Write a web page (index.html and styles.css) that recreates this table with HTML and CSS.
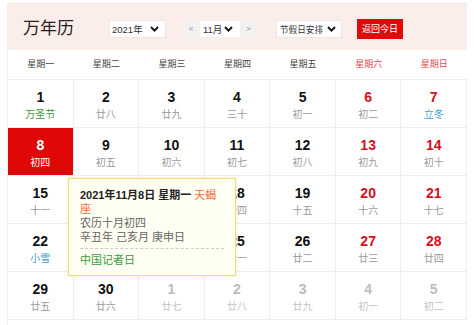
FILE: index.html
```html
<!DOCTYPE html>
<html lang="zh-CN">
<head>
<meta charset="utf-8">
<title>万年历</title>
<link rel="stylesheet" href="styles.css">
</head>
<body>
<div class="cal">
  <div class="hd">
    <div class="title">万年历</div>
    <div class="sel year"><span>2021年</span><svg class="chev" width="9" height="6" viewBox="0 0 9 6"><polyline points="1,1 4.5,4.6 8,1"/></svg></div>
    <div class="mgroup">
      <span class="arrow">&lt;</span>
      <div class="sel month"><span>11月</span><svg class="chev" width="9" height="6" viewBox="0 0 9 6"><polyline points="1,1 4.5,4.6 8,1"/></svg></div>
      <span class="arrow">&gt;</span>
    </div>
    <div class="sel hol"><span>节假日安排</span><svg class="chev" width="9" height="6" viewBox="0 0 9 6"><polyline points="1,1 4.5,4.6 8,1"/></svg></div>
    <div class="btn">返回今日</div>
  </div>
  <div class="week">
    <div>星期一</div><div>星期二</div><div>星期三</div><div>星期四</div><div>星期五</div><div class="we">星期六</div><div class="we">星期日</div>
  </div>
  <div class="grid">
    <div class="cell"><b>1</b><i class="fest">万圣节</i></div>
    <div class="cell"><b>2</b><i>廿八</i></div>
    <div class="cell"><b>3</b><i>廿九</i></div>
    <div class="cell"><b>4</b><i>三十</i></div>
    <div class="cell"><b>5</b><i>初一</i></div>
    <div class="cell red"><b>6</b><i>初二</i></div>
    <div class="cell red"><b>7</b><i class="term">立冬</i></div>

    <div class="cell today"><b>8</b><i>初四</i></div>
    <div class="cell"><b>9</b><i>初五</i></div>
    <div class="cell"><b>10</b><i>初六</i></div>
    <div class="cell"><b>11</b><i>初七</i></div>
    <div class="cell"><b>12</b><i>初八</i></div>
    <div class="cell red"><b>13</b><i>初九</i></div>
    <div class="cell red"><b>14</b><i>初十</i></div>

    <div class="cell"><b>15</b><i>十一</i></div>
    <div class="cell"><b>16</b><i>十二</i></div>
    <div class="cell"><b>17</b><i>十三</i></div>
    <div class="cell"><b>18</b><i>十四</i></div>
    <div class="cell"><b>19</b><i>十五</i></div>
    <div class="cell red"><b>20</b><i>十六</i></div>
    <div class="cell red"><b>21</b><i>十七</i></div>

    <div class="cell"><b>22</b><i class="term">小雪</i></div>
    <div class="cell"><b>23</b><i>十九</i></div>
    <div class="cell"><b>24</b><i>二十</i></div>
    <div class="cell"><b>25</b><i>廿一</i></div>
    <div class="cell"><b>26</b><i>廿二</i></div>
    <div class="cell red"><b>27</b><i>廿三</i></div>
    <div class="cell red"><b>28</b><i>廿四</i></div>

    <div class="cell"><b>29</b><i>廿五</i></div>
    <div class="cell"><b>30</b><i>廿六</i></div>
    <div class="cell other"><b>1</b><i>廿七</i></div>
    <div class="cell other"><b>2</b><i>廿八</i></div>
    <div class="cell other"><b>3</b><i>廿九</i></div>
    <div class="cell other"><b>4</b><i>初一</i></div>
    <div class="cell other"><b>5</b><i>初二</i></div>
  </div>
  <div class="foot"></div>
  <div class="tip">
    <div class="tip-main">
      <div><strong>2021年11月8日 星期一</strong> <span class="star">天蝎座</span></div>
      <div>农历十月初四</div>
      <div>辛丑年 己亥月 庚申日</div>
    </div>
    <div class="tip-fest">中国记者日</div>
  </div>
</div>
</body>
</html>
```
FILE: styles.css
```css
* { box-sizing: border-box; }
html, body { margin: 0; padding: 0; background: #fff; }
body {
  font-family: "Liberation Sans", "Noto Sans CJK SC", sans-serif;
  color: #333;
}
.cal {
  position: relative;
  margin: 3px 0 0 7px;
  width: 460px;
  border-left: 1px solid #eee;
  border-top: 1px solid #f3e6e3;
}
.hd {
  height: 46px;
  background: #fbede9;
  display: flex;
  align-items: flex-start;
  padding-top: 16px;
}
.title {
  margin: -2px 0 0 15px;
  width: 86px;
  font-size: 17px;
  line-height: 18px;
  color: #222;
  font-family: "Noto Sans CJK SC", sans-serif;
}
.sel {
  height: 18px;
  background: #fff;
  border: 1px solid #efe6e4;
  display: flex;
  align-items: center;
  justify-content: space-between;
  font-size: 9.5px;
  color: #333;
  white-space: nowrap;
}
.chev { display: block; flex: none; }
.chev polyline { fill: none; stroke: #111; stroke-width: 1.9; }
.year { width: 57px; padding: 0 6px 0 2px; }
.mgroup { display: flex; margin-left: 17px; }
.arrow {
  width: 16px; height: 18px;
  background: #f3f1f0;
  color: #888;
  font-size: 8px;
  line-height: 18px;
  text-align: center;
}
.arrow:last-child { width: 15px; }
.month { width: 42px; padding: 0 7px 0 3px; border-color: #f3f1f0; }
.hol { width: 66px; margin-left: 20px; padding: 0 5px 0 3px; font-size: 8.6px; }
.btn {
  margin: -1px 0 0 15px;
  width: 46px; height: 20px;
  background: #e10a0a;
  color: #fff;
  font-size: 9px;
  line-height: 20px;
  text-align: center;
  white-space: nowrap;
}
.week {
  display: grid;
  grid-template-columns: repeat(7, 1fr);
  height: 30px;
  border-bottom: 1px solid #eee;
  background: #fff;
}
.week div {
  font-size: 9px;
  line-height: 29px;
  text-align: center;
  color: #444;
}
.week .we { color: #e8474e; }
.grid {
  display: grid;
  grid-template-columns: repeat(7, 1fr);
}
.cell {
  height: 48px;
  border-right: 1px solid #eee;
  border-bottom: 1px solid #eee;
  text-align: center;
  padding-top: 9px;
}
.cell b {
  display: block;
  font-size: 14px;
  line-height: 16px;
  font-weight: bold;
  color: #111;
}
.cell i {
  display: block;
  font-style: normal;
  font-size: 10px;
  line-height: 14px;
  margin-top: 2px;
  color: #999;
  font-family: "Noto Sans CJK SC", sans-serif;
}
.cell i.fest { color: #3a9a3a; }
.cell i.term { color: #3d9ad6; }
.cell.red b { color: #d6101c; }
.cell.other b { color: #bbb; }
.cell.other i { color: #c4c4c4; }
.cell.today { background: #e00707; }
.cell.today b, .cell.today i { color: #fff; }
.foot { height: 10px; }
.tip {
  position: absolute;
  left: 60px;
  top: 174px;
  width: 168px;
  padding: 9px 11px 8px 11px;
  background: #fffef3;
  border: 1px solid #f3dc78;
  box-shadow: 0 0 2px rgba(240, 210, 100, 0.6);
  font-size: 11px;
  line-height: 14px;
  color: #666;
  z-index: 2;
}
.tip strong { color: #222; font-weight: bold; }
.tip .star { color: #f26a3a; }
.tip-main { padding-bottom: 4px; border-bottom: 1px dashed #ccc; }
.tip-fest { margin-top: 4px; color: #3a9a3a; }
```
